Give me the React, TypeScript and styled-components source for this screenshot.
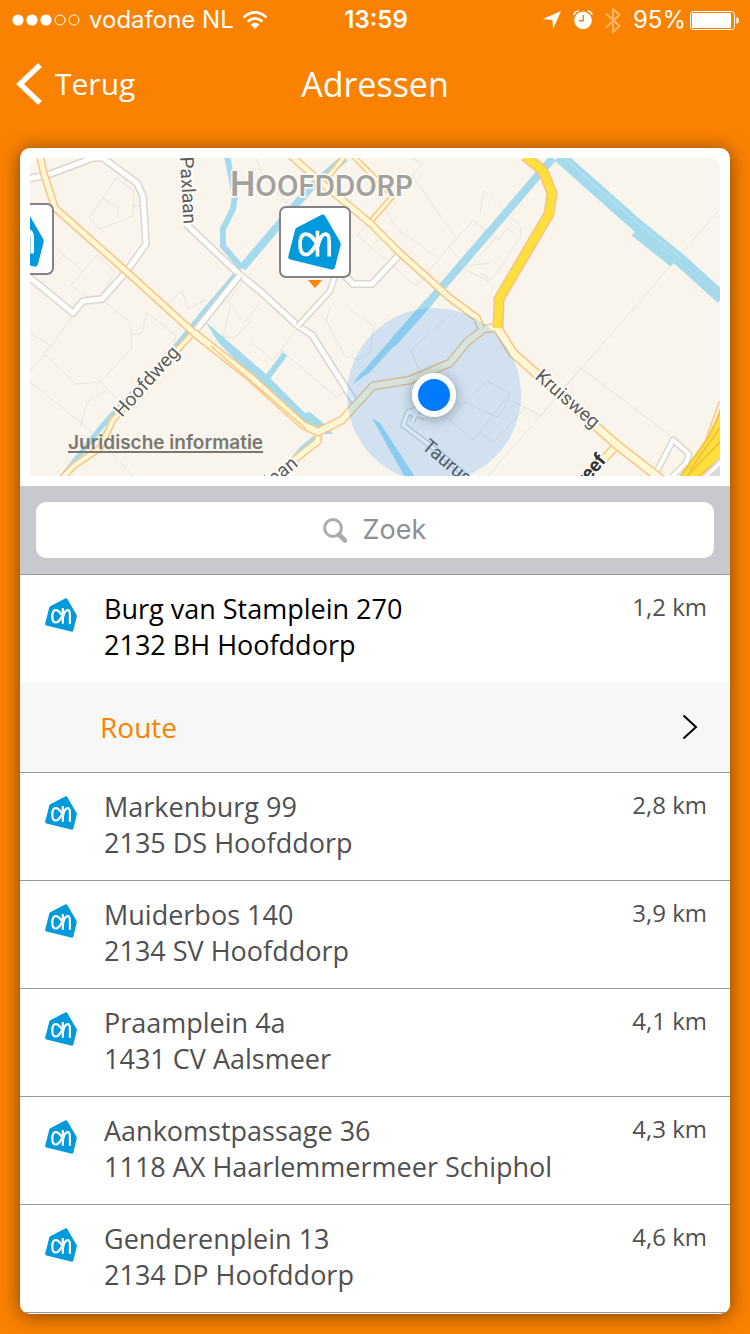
import React, { useState } from "react";
import styled, { createGlobalStyle } from "styled-components";

const ORANGE = "#fb8200";
const BRAND_FONT = `"Open Sans", "Noto Sans", sans-serif`;
const SYSTEM_FONT = `Inter, Roboto, sans-serif`;

const GlobalStyle = createGlobalStyle`
  *, *::before, *::after { box-sizing: border-box; }
  body { margin: 0; background: ${ORANGE}; font-family: ${BRAND_FONT}; }
  button, input { font: inherit; color: inherit; }
`;

const Screen = styled.div`
  min-height: 100vh;
  display: flex;
  flex-direction: column;
`;

const StatusBar = styled.div`
  display: grid;
  grid-template-columns: 1fr auto 1fr;
  align-items: center;
  height: 40px;
  padding: 0 10px 0 12px;
  color: #fff;
  font-family: ${SYSTEM_FONT};
  font-size: 24px;
  line-height: 30px;
`;

const StatusGroup = styled.div<{ $end?: boolean }>`
  display: flex;
  align-items: center;
  gap: ${(p) => (p.$end ? 12 : 8)}px;
  justify-content: ${(p) => (p.$end ? "flex-end" : "flex-start")};
  white-space: nowrap;
  svg { flex: none; }
`;

const BatteryGroup = styled.div`
  display: flex;
  align-items: center;
  gap: 4px;
`;

const Clock = styled.time`
  font-weight: 600;
`;

const NavBar = styled.header`
  display: grid;
  grid-template-columns: 1fr auto 1fr;
  align-items: center;
  height: 88px;
  padding: 0 16px;
  color: #fff;
`;

const BackButton = styled.button`
  justify-self: start;
  display: flex;
  align-items: center;
  gap: 12px;
  padding: 0;
  border: 0;
  background: none;
  font-size: 30px;
  line-height: 36px;
  cursor: pointer;
`;

const Title = styled.h1`
  margin: 0;
  font-size: 34px;
  line-height: 40px;
  font-weight: 400;
`;

const Card = styled.main`
  margin: 20px;
  padding-bottom: 1px;
  border-radius: 10px;
  background: #fff;
  box-shadow: 0 2px 20px rgba(0, 0, 0, 0.5);
  overflow: hidden;
`;

const MapFrame = styled.section`
  position: relative;
  padding: 10px;
`;

const MapDrawing = styled.svg`
  display: block;
  width: 100%;
  height: auto;
  border-radius: 10px 10px 0 0;
  background: #f9f5ed;
`;

const LegalLink = styled.a`
  position: absolute;
  left: 48px;
  bottom: 31px;
  color: #7b7872;
  font-family: ${SYSTEM_FONT};
  font-size: 19px;
  line-height: 24px;
  font-weight: 600;
  text-decoration: underline 2px;
  text-decoration-skip-ink: none;
  text-underline-offset: 2px;
`;

const SearchBar = styled.div`
  padding: 16px;
  background: #c9c8ce;
  border-bottom: 1px solid #99989c;
`;

const SearchField = styled.label`
  display: flex;
  align-items: center;
  justify-content: center;
  gap: 16px;
  height: 56px;
  border-radius: 10px;
  background: #fff;
`;

const SearchInput = styled.input`
  width: 65px;
  padding: 0;
  border: 0;
  outline: 0;
  background: none;
  font-family: ${SYSTEM_FONT};
  font-size: 27px;
  line-height: 34px;
  color: #333;
  &::placeholder { color: #8e8e93; opacity: 1; }
`;

const StoreList = styled.ul`
  margin: 0;
  padding: 0;
  list-style: none;
`;

const StoreItem = styled.li`
  border-bottom: 1px solid #97979b;
`;

const StoreRow = styled.button<{ $active: boolean }>`
  display: flex;
  align-items: flex-start;
  width: 100%;
  min-height: 107px;
  padding: 16px 23px 16px 25px;
  border: 0;
  background: #fff;
  color: ${(p) => (p.$active ? "#000" : "#505050")};
  text-align: left;
  cursor: pointer;
  svg { flex: none; margin-top: 7px; }
`;

const Address = styled.span`
  flex: 1;
  margin-left: 27px;
  font-size: 27px;
  line-height: 36px;
`;

const AddressLine = styled.span`
  display: block;
`;

const Distance = styled.span`
  color: #505050;
  font-size: 24px;
  line-height: 32px;
`;

const RouteLink = styled.a`
  display: flex;
  align-items: center;
  justify-content: space-between;
  height: 90px;
  padding: 0 32px 0 80px;
  background: #f7f7f7;
  color: ${ORANGE};
  font-size: 28px;
  line-height: 36px;
  text-decoration: none;
`;

function LogoShape() {
  return (
    <>
      <path
        d="M26 41 L99 3 Q106 -1 111 6 L155 82 Q158 87 157 93 L140 160 Q138 168 129 166 L7 136 Q-1 134 1 126 L21 48 Q22 43 26 41Z"
        fill="#0099dc"
      />
      <g fill="none" stroke="#fff" strokeWidth="11" strokeLinejoin="round">
        <path d="M86 88 C76 74 68 60 54 60 C40 60 36 74 36 91 C36 108 40 121 54 121 C68 121 76 104 86 88Z" />
        <path d="M88 127 V50" />
        <path d="M89 96 C94 74 103 60 112 60 C121 60 123 70 123 82 V127" />
      </g>
    </>
  );
}

const Logo = () => (
  <svg width="32" height="34" viewBox="0 0 158 168" aria-hidden="true">
    <LogoShape />
  </svg>
);

function StorePin({ x, y }: { x: number; y: number }) {
  return (
    <g transform={`translate(${x} ${y})`}>
      <rect x="1" y="1" width="70" height="70" rx="6" fill="#fff" stroke="#838286" strokeWidth="2" />
      <g transform="translate(9 8) scale(.335)">
        <LogoShape />
      </g>
      <path d="M29 74 h14 l-7 8z" fill={ORANGE} />
    </g>
  );
}

function Road({ d, kind = "local", w }: { d: string; kind?: "local" | "main" | "highway"; w: number }) {
  const [edge, fill] = {
    local: ["#dcd5cc", "#fff"],
    main: ["#fac585", "#fef8d6"],
    highway: ["#f9c184", "#fee03c"],
  }[kind];
  return (
    <g fill="none" strokeLinejoin="round">
      <path d={d} stroke={edge} strokeWidth={w + 3} />
      <path d={d} stroke={fill} strokeWidth={w} />
    </g>
  );
}

function AreaMap() {
  return (
    <MapDrawing viewBox="30 158 690 318" role="img" aria-label="Kaart van Hoofddorp">
      <defs>
        <filter id="dotShadow" x="-60%" y="-60%" width="220%" height="220%">
          <feDropShadow dx="0" dy="2" stdDeviation="7" floodOpacity=".35" />
        </filter>
      </defs>
      <rect x="30" y="158" width="690" height="318" fill="#f9f5ed" />
      <g fill="none" stroke="#e8e5de" strokeWidth="1">
        <path d="M116 178 L134 191 L133 216 L100 229 L89 218 L103 198Z M103 198 L118 208 V217 M124 183 L127 178 M134 206 L140 205" />
        <path d="M55 247 L82 271 M43 280 L43 293 M43 277 L64 255 M97 255 L71 285 L85 296 M97 255 L115 272 L100 296 M106 303 L130 322 L132 348 L100 382 L76 384 L45 355 L30 371" />
        <path d="M30 333 L51 346 L72 317 M51 346 L43 354 M130 335 L142 333 L147 312 L175 335 V345 M30 382 L95 434 L133 476 M100 382 L120 402 M107 390 L87 402 L80 428" />
        <path d="M169 303 L182 291 L188 309 L206 299 M242 284 L228 301 L244 323 L260 303 M223 337 L235 338 L251 321 M223 337 L230 308" />
        <path d="M256 158 L264 179 L290 206 M410 158 L423 163 L412 175 L456 238 M376 194 L397 229 L438 258 M357 235 L377 217 M357 235 L416 286 L430 270 M372 246 L386 231 M456 238 L422 279 M473 220 L449 248 L467 266 L490 263 M473 220 L490 235 M466 270 L490 282" />
        <path d="M480 212 L484 191 L521 227 V236 L492 280 L480 273 M480 225 L498 240 L508 228 L516 235 M497 236 L480 256 M720 209 L627 316 L488 476 M581 368 L672 437 M581 368 L565 386 L541 416 L511 400" />
        <path d="M330 307 L326 320 L345 356 L358 360 L370 352 L374 326 L350 310 M281 350 L300 325 M281 350 L336 397 L351 388 M250 341 L272 360 L283 350 M411 350 L450 315 M411 350 L419 370" />
        <path d="M487 381 L510 393 L503 411 L497 417 L465 402 L450 420 L473 440 L505 400 M487 381 L465 402 M440 415 L453 421 M480 432 L494 442 L525 408" />
      </g>

      <g fill="none" stroke="#a5daec" strokeLinejoin="miter">
        <path d="M227 156 L235 196 L233 209 L223 229 L223 246 L242 268" strokeWidth="6" />
        <path d="M242 268 L310 188 L345 158" strokeWidth="8" />
        <path d="M236 274 L202 314 L177 345 L103 425 L62 477" strokeWidth="5" />
        <path d="M267 378 L285 354" strokeWidth="6" />
        <path d="M553 158 L480 243 L417 316 L392 344" strokeWidth="8" />
        <path d="M559 156 L638 226 L680 260 L722 298" strokeWidth="13" />
        <path d="M636 230 L675 261" strokeWidth="14" />
      </g>
      <path d="M206 322 L268 376 L305 413 L310 412 L328 427 L333 434 L320 434 L295 422 L248 373 L218 342Z" fill="#a5daec" />
      <path d="M425 300 L433 304 L370 372 L353 384 Q357 376 365 369Z M372 418 L380 423 L415 477 H405Z M316 434 L300 447 L292 457 L299 457 L320 442Z" fill="#a5daec" />
      <path d="M562 156 L640 225 L681 258" fill="none" stroke="#c0e6f3" strokeWidth="1" />

      <Road d="M28 179 L36 177 L45 176 L93 158 L103 158 L137 183 L143 196 L146 244 L126 272 L102 299 L83 301 L73 313 L28 276" w={5} />
      <Road d="M186 224 L240 275 L260 291 L298 326 L312 335 L356 404" w={5} />
      <Road d="M298 326 L330 291 L335 276" w={4} />
      <Road d="M345 276 L353 284 L372 284 L400 254" w={5} />
      <Road d="M240 275 L196 330" w={5} />
      <Road d="M654 477 L673 440 L689 454 L686 463 L672 477" w={4} />
      <Road d="M425 417 L408 412 L403 425 L440 453 L470 480 M408 412 L418 409 L412 422" w={3} />

      <Road kind="main" d="M193 333 L113 420 L100 448 L75 465 L62 478" w={4} />
      <Road kind="main" d="M318 433 L318 441 L298 457 L270 480" w={5} />
      <Road kind="main" d="M345 156 L323 183 M353 156 L393 196 L370 222" w={3} />
      <Road kind="main" d="M40 156 L44 174 L55 208 L127 272 L193 332" w={5} />
      <Road kind="main" d="M193 332 L250 377 L303 425 L318 432 L342 420 L373 386 L410 380 L450 363 L467 342 L484 329 L499 327" w={6} />
      <path d="M211 346 L253 383 L306 429" fill="none" stroke="#fac585" strokeWidth="1.5" />
      <Road kind="main" d="M291 156 L323 184 L370 223 L400 253 L450 298 L477 318 L481 328" w={5} />
      <Road kind="main" d="M616 446 L604 459 L582 482" w={6} />
      <Road kind="main" d="M498 329 L513 353 L617 445 L662 480" w={7} />
      <Road kind="highway" d="M525 156 L543 171 L552 193 L549 214 L499 299 L498 328" w={8} />
      <Road kind="main" d="M721 402 L707 441" w={2} />
      <path d="M680 477 L708 438 L721 411 V458 L698 477Z" fill="#fee03c" stroke="#f6c13f" strokeWidth="2" />
      <path d="M686 477 L722 440 M690 470 L722 425" fill="none" stroke="#f2ba3a" strokeWidth="1.5" />
      <path d="M698 480 L721 456 V480Z" fill="#dcdad8" />
      <path d="M702 480 L722 461" stroke="#fff" strokeWidth="3" />

      <g fontFamily="Roboto, sans-serif" fontSize="19" fill="#5c5b5b" stroke="#fffdf8" strokeWidth="4" paintOrder="stroke" strokeLinejoin="round">
        <text transform="translate(180 157) rotate(87)">Paxlaan</text>
        <text transform="translate(122 418) rotate(-48)">Hoofdweg</text>
        <text transform="translate(534 378) rotate(41)">Kruisweg</text>
        <text transform="translate(271 488) rotate(-39)">laan</text>
        <text transform="translate(577 496) rotate(-50)" fontWeight="700" fill="#333">Dreef</text>
      </g>
      <text x="230" y="196" fontFamily={SYSTEM_FONT} fontWeight="600" fontSize="28" fill="#a3a19d" stroke="#fffdf8" strokeWidth="3" paintOrder="stroke">
        <tspan fontSize="34">H</tspan>OOFDDORP
      </text>

      <StorePin x={-18} y={203} />
      <StorePin x={279} y={206} />

      <circle cx="434" cy="395" r="87" fill="#007aff" fillOpacity=".16" />
      <text transform="translate(421 448) rotate(40)" fontFamily="Roboto, sans-serif" fontSize="19" fill="#515d6b">
        Taurusavenue
      </text>
      <circle cx="434" cy="395" r="22" fill="#fff" filter="url(#dotShadow)" />
      <circle cx="434" cy="395" r="16" fill="#007aff" />
    </MapDrawing>
  );
}

const Signal = () => (
  <svg width="69" height="12" viewBox="0 0 69 12" aria-label="Signaal 3 van 5">
    {[6, 20, 34].map((x) => (
      <circle key={x} cx={x} cy="6" r="5.6" fill="#fff" />
    ))}
    {[48, 62].map((x) => (
      <circle key={x} cx={x} cy="6" r="5" fill="none" stroke="#fff" />
    ))}
  </svg>
);

const Wifi = () => (
  <svg width="26" height="20" viewBox="0 0 26 20" aria-label="Wifi">
    <path d="M13 19 L8.6 14.6 Q13 11 17.4 14.6Z" fill="#fff" />
    <g fill="none" stroke="#fff" strokeWidth="2.6">
      <path d="M5.6 11.6 Q13 5.2 20.4 11.6" />
      <path d="M1.6 7.4 Q13 -2.6 24.4 7.4" />
    </g>
  </svg>
);

const LocationArrow = () => (
  <svg width="18" height="18" viewBox="0 0 18 18" aria-label="Locatie">
    <path d="M18 0 L10.2 18 L9.4 9 L0 8Z" fill="#fff" />
  </svg>
);

const AlarmClock = () => (
  <svg width="20" height="20" viewBox="0 0 20 20" aria-label="Wekker">
    <circle cx="10" cy="10.4" r="8.8" fill="#fff" />
    <path d="M1 5 Q1.5 1.5 5.5 1 M19 5 Q18.5 1.5 14.5 1" fill="none" stroke="#fff" strokeWidth="1.6" />
    <path d="M10.4 5 V10.8 H6" fill="none" stroke={ORANGE} strokeWidth="1.4" />
  </svg>
);

const Bluetooth = () => (
  <svg width="16" height="27" viewBox="0 0 16 27" aria-label="Bluetooth">
    <path d="M1 6.5 L14.5 19 L8 25 V2 L14.5 8 L1 20.5" fill="none" stroke="#fdb76b" strokeWidth="2" />
  </svg>
);

const Battery = () => (
  <svg width="50" height="20" viewBox="0 0 50 20" aria-hidden="true">
    <rect x="0.5" y="1.5" width="44" height="18" rx="3" fill="none" stroke="#fff" />
    <rect x="2" y="3" width="39" height="15" rx="1" fill="#fff" />
    <path d="M46.4 7.3 Q49 7.9 49 10.5 T46.4 13.7Z" fill="#fff" />
  </svg>
);

const stores = [
  { street: "Burg van Stamplein 270", city: "2132 BH Hoofddorp", distance: "1,2 km" },
  { street: "Markenburg 99", city: "2135 DS Hoofddorp", distance: "2,8 km" },
  { street: "Muiderbos 140", city: "2134 SV Hoofddorp", distance: "3,9 km" },
  { street: "Praamplein 4a", city: "1431 CV Aalsmeer", distance: "4,1 km" },
  { street: "Aankomstpassage 36", city: "1118 AX Haarlemmermeer Schiphol", distance: "4,3 km" },
  { street: "Genderenplein 13", city: "2134 DP Hoofddorp", distance: "4,6 km" },
];

export default function App() {
  const [selected, setSelected] = useState(0);
  return (
    <Screen>
      <GlobalStyle />
      <StatusBar>
        <StatusGroup>
          <Signal />
          <span>vodafone NL</span>
          <Wifi />
        </StatusGroup>
        <Clock>13:59</Clock>
        <StatusGroup $end>
          <LocationArrow />
          <AlarmClock />
          <Bluetooth />
          <BatteryGroup>
            <span>95%</span>
            <Battery />
          </BatteryGroup>
        </StatusGroup>
      </StatusBar>

      <NavBar>
        <BackButton type="button">
          <svg width="27" height="42" viewBox="0 0 27 42" aria-hidden="true">
            <path d="M24 2 L4 21 L24 40" fill="none" stroke="#fff" strokeWidth="5.4" />
          </svg>
          Terug
        </BackButton>
        <Title>Adressen</Title>
      </NavBar>

      <Card>
        <MapFrame>
          <AreaMap />
          <LegalLink href="#juridisch">Juridische informatie</LegalLink>
        </MapFrame>

        <SearchBar role="search">
          <SearchField>
            <svg width="24" height="25" viewBox="0 0 24 25" aria-hidden="true">
              <circle cx="10" cy="10" r="8.4" fill="none" stroke="#acacac" strokeWidth="3" />
              <path d="M16 16.5 L22 22.5" stroke="#acacac" strokeWidth="4.6" strokeLinecap="round" />
            </svg>
            <SearchInput type="text" placeholder="Zoek" aria-label="Zoek" />
          </SearchField>
        </SearchBar>

        <StoreList>
          {stores.map((store, i) => (
            <StoreItem key={store.city + store.street}>
              <StoreRow type="button" $active={i === selected} onClick={() => setSelected(i)}>
                <Logo />
                <Address>
                  <AddressLine>{store.street}</AddressLine>
                  <AddressLine>{store.city}</AddressLine>
                </Address>
                <Distance>{store.distance}</Distance>
              </StoreRow>
              {i === selected && (
                <RouteLink href="#route">
                  Route
                  <svg width="16" height="26" viewBox="0 0 16 26" aria-hidden="true">
                    <path d="M1.5 1.5 L14 13 L1.5 24.5" fill="none" stroke="#000" strokeWidth="2" />
                  </svg>
                </RouteLink>
              )}
            </StoreItem>
          ))}
        </StoreList>
      </Card>
    </Screen>
  );
}
